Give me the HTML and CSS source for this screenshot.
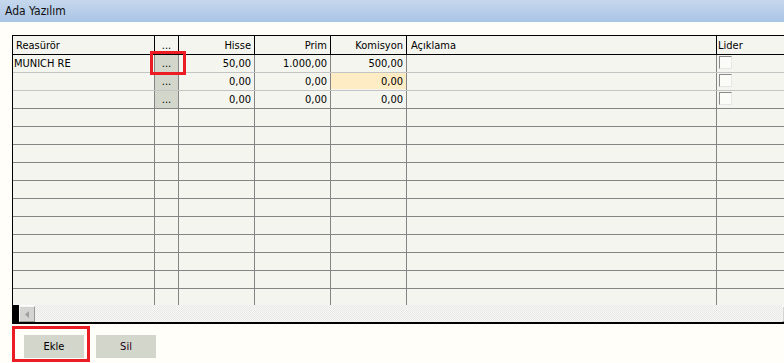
FILE: index.html
```html
<!DOCTYPE html>
<html lang="tr">
<head>
<meta charset="utf-8">
<title>Ada Yazılım</title>
<link rel="stylesheet" href="styles.css">
</head>
<body>
<div class="window">
  <div class="titlebar">Ada Yazılım</div>
  <div class="content">
    <div class="grid">
      <div class="row head">
        <div class="cell left">Reasürör</div>
        <div class="cell center">...</div>
        <div class="cell right">Hisse</div>
        <div class="cell right">Prim</div>
        <div class="cell right">Komisyon</div>
        <div class="cell left pad4">Açıklama</div>
        <div class="cell left last">Lider</div>
      </div>
      <div class="body">
        <div class="row data light">
          <div class="cell left tight">MUNICH RE</div>
          <div class="cell center btncell">...</div>
          <div class="cell right">50,00</div>
          <div class="cell right">1.000,00</div>
          <div class="cell right">500,00</div>
          <div class="cell"></div>
          <div class="cell last"><span class="check"></span></div>
        </div>
        <div class="row data light">
          <div class="cell left tight"></div>
          <div class="cell center btncell">...</div>
          <div class="cell right">0,00</div>
          <div class="cell right">0,00</div>
          <div class="cell right"><span class="hl">0,00</span></div>
          <div class="cell"></div>
          <div class="cell last"><span class="check"></span></div>
        </div>
        <div class="row data">
          <div class="cell left tight"></div>
          <div class="cell center btncell">...</div>
          <div class="cell right">0,00</div>
          <div class="cell right">0,00</div>
          <div class="cell right">0,00</div>
          <div class="cell"></div>
          <div class="cell last"><span class="check"></span></div>
        </div>
        <div class="row"><div class="cell"></div><div class="cell"></div><div class="cell"></div><div class="cell"></div><div class="cell"></div><div class="cell"></div><div class="cell last"></div></div>
        <div class="row"><div class="cell"></div><div class="cell"></div><div class="cell"></div><div class="cell"></div><div class="cell"></div><div class="cell"></div><div class="cell last"></div></div>
        <div class="row"><div class="cell"></div><div class="cell"></div><div class="cell"></div><div class="cell"></div><div class="cell"></div><div class="cell"></div><div class="cell last"></div></div>
        <div class="row"><div class="cell"></div><div class="cell"></div><div class="cell"></div><div class="cell"></div><div class="cell"></div><div class="cell"></div><div class="cell last"></div></div>
        <div class="row"><div class="cell"></div><div class="cell"></div><div class="cell"></div><div class="cell"></div><div class="cell"></div><div class="cell"></div><div class="cell last"></div></div>
        <div class="row"><div class="cell"></div><div class="cell"></div><div class="cell"></div><div class="cell"></div><div class="cell"></div><div class="cell"></div><div class="cell last"></div></div>
        <div class="row"><div class="cell"></div><div class="cell"></div><div class="cell"></div><div class="cell"></div><div class="cell"></div><div class="cell"></div><div class="cell last"></div></div>
        <div class="row"><div class="cell"></div><div class="cell"></div><div class="cell"></div><div class="cell"></div><div class="cell"></div><div class="cell"></div><div class="cell last"></div></div>
        <div class="row"><div class="cell"></div><div class="cell"></div><div class="cell"></div><div class="cell"></div><div class="cell"></div><div class="cell"></div><div class="cell last"></div></div>
        <div class="row"><div class="cell"></div><div class="cell"></div><div class="cell"></div><div class="cell"></div><div class="cell"></div><div class="cell"></div><div class="cell last"></div></div>
        <div class="row"><div class="cell"></div><div class="cell"></div><div class="cell"></div><div class="cell"></div><div class="cell"></div><div class="cell"></div><div class="cell last"></div></div>
      </div>
      <div class="hscroll">
        <span class="sb-black"></span>
        <span class="sb-btn">
          <svg width="4" height="7" viewBox="0 0 4 7"><path d="M4 0 L0 3.5 L4 7 Z" fill="#a0a0a0"/></svg>
        </span>
        <span class="sb-track"></span>
        <span class="sb-btn"></span>
      </div>
      <div class="callout"></div>
    </div>
    <div class="buttons">
      <div class="focus-mark"><button class="btn">Ekle</button></div>
      <button class="btn dark">Sil</button>
    </div>
  </div>
</div>
</body>
</html>
```
FILE: styles.css
```css
html, body {
  margin: 0;
  padding: 0;
}
body {
  background: #fffef8;
  font-family: "DejaVu Sans Condensed", "DejaVu Sans", "Liberation Sans", sans-serif;
  font-stretch: condensed;
  font-size: 11px;
  color: #000;
  overflow: hidden;
  width: 784px;
  height: 363px;
}
.titlebar {
  height: 22px;
  line-height: 22px;
  padding-left: 5px;
  font-size: 12px;
  color: #101010;
  background: linear-gradient(#c6d8ee, #aac4e4);
}
.content {
  padding-top: 13px;
  padding-left: 12px;
}
.grid {
  position: relative;
  width: 786px;
  box-sizing: border-box;
  border-top: 1px solid #000;
  border-left: 1px solid #000;
  border-bottom: 2px solid #000;
  background: #f4f5ee;
}
.row {
  display: grid;
  grid-template-columns: 142px 24px 76px 76px 76px 310px 1fr;
  height: 18px;
  box-sizing: border-box;
  border-bottom: 1px solid #848484;
}
.row.light {
  border-bottom-color: #c4c4c4;
}
.row.head {
  height: 19px;
  border-bottom: 1px solid #000;
}
.cell {
  box-sizing: border-box;
  border-right: 1px solid #848484;
  line-height: 17px;
  white-space: nowrap;
  overflow: hidden;
}
.head .cell {
  border-right-color: #000;
  padding-top: 1px;
}
.cell.last {
  border-right: none;
}
.left { text-align: left; padding-left: 3px; }
.left.tight { padding-left: 1px; }
.left.pad4 { padding-left: 4px; }
.head .left.last { padding-left: 1px; }
.right { text-align: right; padding-right: 3px; }
.center { text-align: center; }
.btncell {
  background: #d3d7cb;
}
.hl {
  display: block;
  background: #fdecc4;
  margin-right: -3px;
  padding-right: 3px;
  height: 16px;
  line-height: 17px;
}
.check {
  display: block;
  width: 13px;
  height: 13px;
  box-sizing: border-box;
  margin: 1px 0 0 2px;
  border-top: 1px solid #8a8a8a;
  border-left: 1px solid #8a8a8a;
  border-right: 1px solid #e6e6e6;
  border-bottom: 1px solid #e6e6e6;
  background: #fbfbf8;
}
.body {
  height: 250px;
  overflow: hidden;
}
.hscroll {
  display: flex;
  height: 17px;
  background: #fff;
}
.sb-black {
  width: 6px;
  background: #000;
}
.sb-btn {
  width: 16px;
  height: 16px;
  box-sizing: border-box;
  margin-top: 1px;
  background: #d4d4d0;
  border-top: 1px solid #f4f4f4;
  border-left: 1px solid #f4f4f4;
  border-right: 1px solid #9a9a9a;
  border-bottom: 1px solid #9a9a9a;
  display: flex;
  align-items: center;
  justify-content: center;
}
.sb-track {
  flex: 1;
  background: repeating-conic-gradient(#f8f8f6 0 25%, #e8e8e6 0 50%) 0 0 / 2px 2px;
}
.callout {
  position: absolute;
  left: 137px;
  top: 15px;
  width: 36px;
  height: 24px;
  box-sizing: border-box;
  border: 3px solid #ec1c24;
}
.buttons {
  display: flex;
  align-items: flex-start;
  gap: 6px;
  margin-top: 2px;
}
.focus-mark {
  border: 3px solid #ec1c24;
  padding: 6px 3px 1px 9px;
}
.btn {
  width: 60px;
  height: 23px;
  border: none;
  margin: 0;
  padding: 0;
  background: #d3d7cb;
  font-family: "DejaVu Sans Condensed", "DejaVu Sans", "Liberation Sans", sans-serif;
  font-stretch: condensed;
  font-size: 11px;
  color: #000;
}
.buttons > .btn {
  margin-top: 9px;
}
.btn.dark {
  color: #200020;
}
```
